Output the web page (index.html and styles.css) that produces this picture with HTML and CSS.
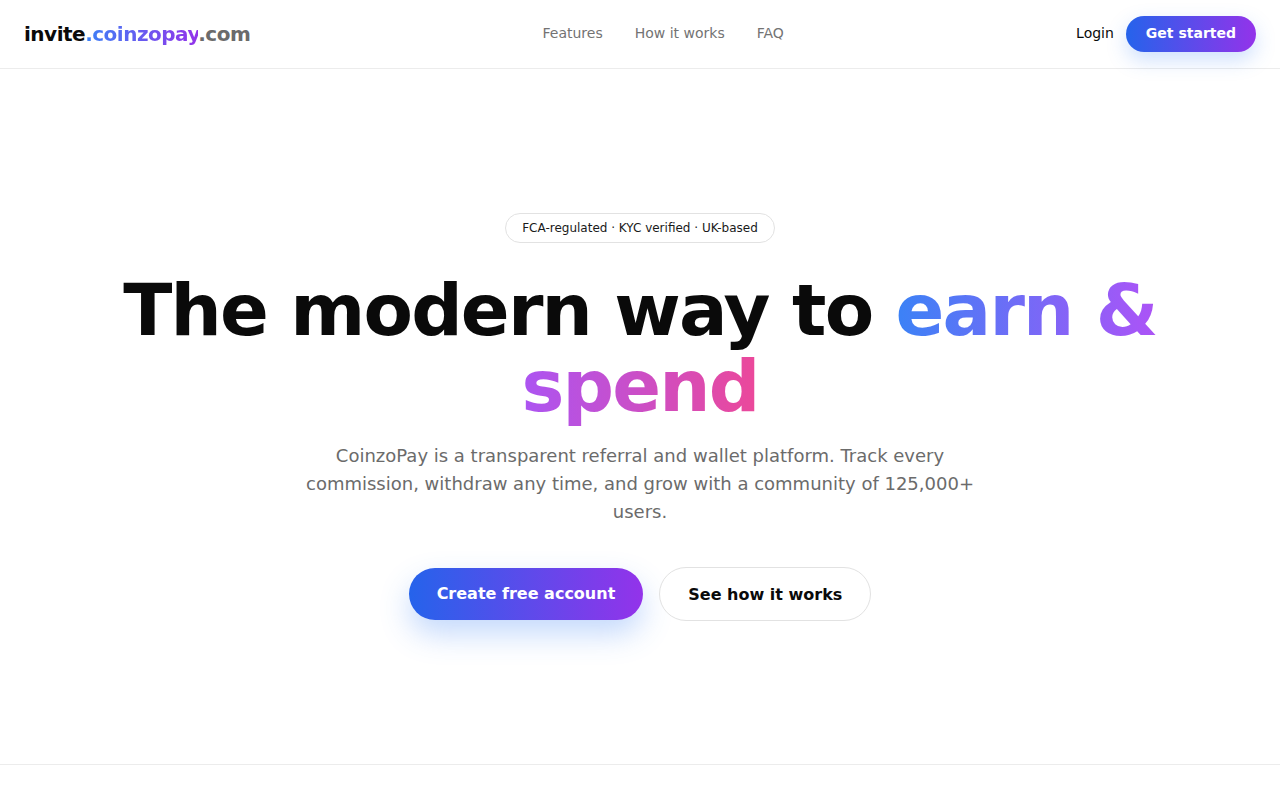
FILE: index.html
```html
<!DOCTYPE html>
<html lang="en">
<head>
    <meta charset="UTF-8">
    <meta name="viewport" content="width=device-width, initial-scale=1.0">
    <title>CoinzoPay – Invite</title>
    <link rel="stylesheet" href="styles.css">
</head>
<body>

    <!-- Barra de topo -->
    <header class="topbar">
        <a class="logo" href="#">invite<span class="logo-brand">.coinzopay</span><span class="logo-tld">.com</span></a>
        <nav class="menu">
            <a href="#features">Features</a>
            <a href="#how">How it works</a>
            <a href="#faq">FAQ</a>
        </nav>
        <div class="acoes">
            <a class="login" href="#">Login</a>
            <a class="btn-gradiente btn-pequeno" href="#">Get started</a>
        </div>
    </header>

    <!-- Hero -->
    <section class="hero">
        <span class="selo">FCA-regulated · KYC verified · UK-based</span>
        <h1>The modern way to <span class="destaque">earn &amp; spend</span></h1>
        <p class="subtitulo">CoinzoPay is a transparent referral and wallet platform. Track every commission, withdraw any time, and grow with a community of 125,000+ users.</p>
        <div class="botoes">
            <a class="btn-gradiente btn-grande" href="#">Create free account</a>
            <a class="btn-contorno" href="#how">See how it works</a>
        </div>
    </section>

</body>
</html>
```

FILE: styles.css
```css
body {
    margin: 0;
    font-family: "DejaVu Sans", sans-serif;
    color: #0a0a0a;
    background: #fff;
}
a {
    text-decoration: none;
    color: inherit;
}

/* topo */
.topbar {
    display: flex;
    align-items: center;
    justify-content: space-between;
    height: 68px;
    padding: 0 24px;
    border-bottom: 1px solid #ececec;
}
.logo {
    font-size: 20px;
    font-weight: bold;
    letter-spacing: -0.5px;
}
.logo-brand {
    background: linear-gradient(90deg, #3b82f6, #9333ea);
    -webkit-background-clip: text;
    background-clip: text;
    color: transparent;
}
.logo-tld {
    color: #6b6b6b;
}
.menu {
    display: flex;
    gap: 32px;
    font-size: 14px;
    color: #737373;
    padding-bottom: 2px;
}
.acoes {
    display: flex;
    align-items: center;
    gap: 12px;
    font-size: 14px;
}
.login {
    padding-bottom: 2px;
}
.btn-gradiente {
    display: inline-flex;
    align-items: center;
    color: #fff;
    font-weight: bold;
    border-radius: 999px;
    background: linear-gradient(90deg, #2563eb, #9333ea);
    box-shadow: 0 8px 20px rgba(59, 130, 246, 0.25);
}
.btn-pequeno {
    height: 36px;
    padding: 0 20px 2px;
    box-sizing: border-box;
    font-size: 14px;
}

/* hero */
.hero {
    display: flex;
    flex-direction: column;
    align-items: center;
    text-align: center;
    padding: 144px 24px 143px;
    border-bottom: 1px solid #ececec;
}
.selo {
    display: inline-block;
    padding: 7px 16px;
    font-size: 12px;
    line-height: 14px;
    border: 1px solid #e2e2e2;
    border-radius: 999px;
    color: #1a1a1a;
}
h1 {
    margin: 30px 0 0;
    font-size: 72px;
    line-height: 1.05;
    letter-spacing: -1.8px;
    font-weight: bold;
}
.destaque {
    background: linear-gradient(90deg, #3b82f6, #a855f7, #ec4899);
    -webkit-background-clip: text;
    background-clip: text;
    color: transparent;
}
.subtitulo {
    max-width: 680px;
    margin: 18px 0 0;
    font-size: 18px;
    line-height: 28px;
    color: #6b6b6b;
}
.botoes {
    display: flex;
    align-items: center;
    gap: 16px;
    margin-top: 41px;
}
.btn-grande {
    height: 52px;
    padding: 0 28px 1px;
    box-sizing: border-box;
    font-size: 16px;
    box-shadow: 0 14px 30px rgba(59, 130, 246, 0.3);
}
.btn-contorno {
    display: inline-flex;
    align-items: center;
    height: 52px;
    padding: 0 28px;
    font-size: 16px;
    font-weight: bold;
    border: 1px solid #e2e2e2;
    border-radius: 999px;
    background: #fff;
}
```
